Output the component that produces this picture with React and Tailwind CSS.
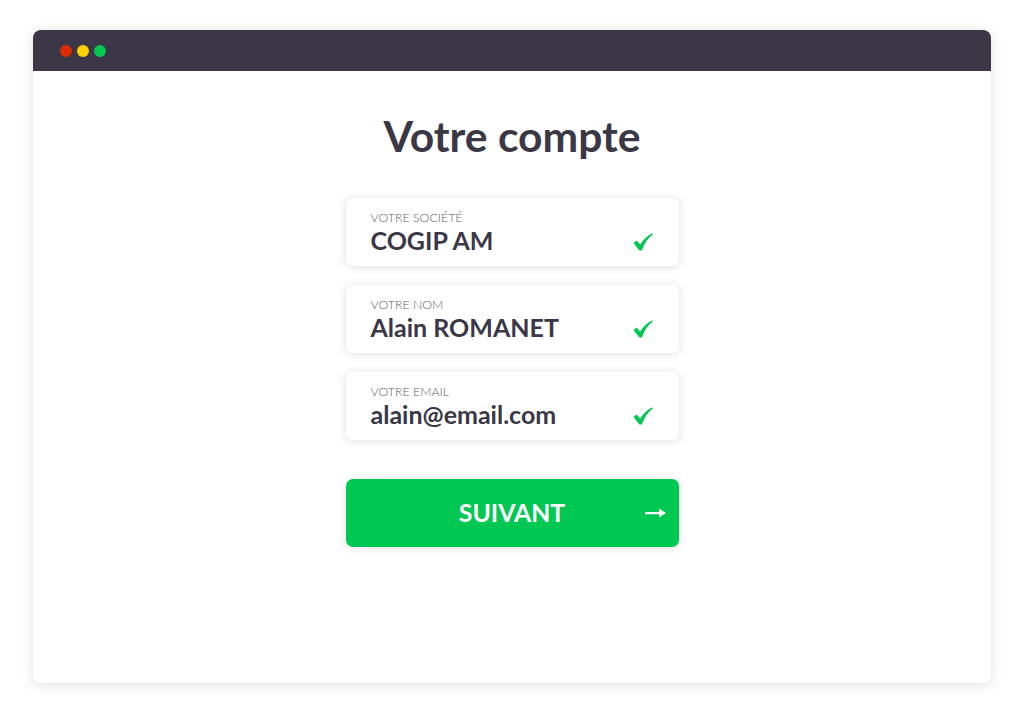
import React from 'react';

const fields = [
    { label: 'Votre société', value: 'COGIP AM' },
    { label: 'Votre nom', value: 'Alain ROMANET' },
    { label: 'Votre email', value: 'alain@email.com' }
];

const Check = () => (
    <svg width="20" height="18" viewBox="0 0 20 18" className="shrink-0">
        <path d="M0.5 10 L3.6 7.6 L7.2 11.6 C10 7 13.6 3 19.5 0.3 L19.8 1.6 C15 5 11.5 10.5 8.8 17.5 L6.4 17.5 Z" fill="#00c853" />
    </svg>
);

const Arrow = () => (
    <svg width="21" height="10" viewBox="0 0 21 10">
        <rect x="0" y="4" width="15" height="2.2" fill="white" />
        <path d="M14 0.5 L21 5 L14 9.5 Z" fill="white" />
    </svg>
);

const App = () => {
    return (
        <div className="w-[1024px] h-[714px] bg-white pt-[30px] pl-[33px] font-['Lato',sans-serif]">
            <div className="w-[958px] h-[653px] bg-white rounded-[8px] shadow-[0_2px_14px_rgba(0,0,0,0.12)] overflow-hidden flex flex-col">
                {/* Window bar */}
                <div className="h-[41px] bg-[#3b3746] flex items-center gap-[5px] pl-[27px] shrink-0">
                    <span className="w-[12px] h-[12px] rounded-full bg-[#dd2c00]" />
                    <span className="w-[12px] h-[12px] rounded-full bg-[#ffd000]" />
                    <span className="w-[12px] h-[12px] rounded-full bg-[#00c853]" />
                </div>

                <div className="flex flex-col items-center">
                    <h1 className="mt-[41px] text-[42.6px] leading-[48px] font-bold text-[#3b3746]">
                        Votre compte
                    </h1>

                    <div className="mt-[38px] w-[333px] flex flex-col gap-[19px]">
                        {fields.map(f => (
                            <div
                                key={f.label}
                                className="h-[68px] bg-white rounded-[7px] shadow-[0_1px_10px_rgba(0,0,0,0.13)] pl-[25px] pr-[26px] pt-[13px] flex items-start justify-between"
                            >
                                <div className="flex flex-col">
                                    <span className="text-[12.4px] leading-[14px] font-light uppercase text-[#5f5c6a]">
                                        {f.label}
                                    </span>
                                    <span className="text-[25px] leading-[30px] font-bold text-[#3b3746]">
                                        {f.value}
                                    </span>
                                </div>
                                <div className="pt-[22px]">
                                    <Check />
                                </div>
                            </div>
                        ))}
                    </div>

                    <button className="mt-[39px] w-[333px] h-[68px] bg-[#00c853] rounded-[7px] shadow-[0_1px_10px_rgba(0,0,0,0.12)] relative flex items-center justify-center">
                        <span className="text-[24.8px] font-bold text-white">SUIVANT</span>
                        <span className="absolute right-[13px] top-[29px] flex">
                            <Arrow />
                        </span>
                    </button>
                </div>
            </div>
        </div>
    );
};

export default App;
